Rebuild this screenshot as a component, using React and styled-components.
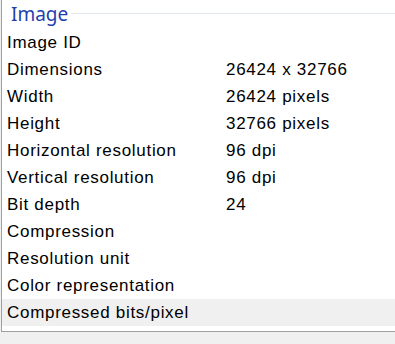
import React from 'react';
import styled, { createGlobalStyle } from 'styled-components';

const GlobalStyle = createGlobalStyle`
    html, body {
        margin: 0;
        padding: 0;
        background: #f0f0f0;
    }
`;

const Panel = styled.div`
    margin-left: 1px;
    width: 394px;
    height: 332px;
    box-sizing: border-box;
    background: #ffffff;
    border-left: 1px solid #a0a0a0;
    border-bottom: 1px solid #a0a0a0;
    overflow: hidden;
`;

const GroupHeader = styled.div`
    display: flex;
    align-items: flex-start;
    height: 29px;
    padding-left: 9px;
`;

const GroupTitle = styled.span`
    font-family: "Noto Sans", "Open Sans", sans-serif;
    font-size: 19px;
    line-height: 28px;
    color: #1f3fae;
`;

const GroupRule = styled.div`
    flex: 1;
    height: 1px;
    margin-top: 13px;
    margin-left: 3px;
    background: #e2e8f1;
`;

const Row = styled.div`
    display: grid;
    grid-template-columns: 219px 1fr;
    height: 27px;
    padding-left: 5px;
    font-family: "Liberation Sans", Arial, sans-serif;
    font-size: 17px;
    letter-spacing: 0.7px;
    line-height: 27px;
    color: #000000;
    background: ${(p) => (p.selected ? '#f0f0f0' : 'transparent')};
`;

const Cell = styled.span`
    white-space: nowrap;
`;

const rows = [
    ['Image ID', ''],
    ['Dimensions', '26424 x 32766'],
    ['Width', '26424 pixels'],
    ['Height', '32766 pixels'],
    ['Horizontal resolution', '96 dpi'],
    ['Vertical resolution', '96 dpi'],
    ['Bit depth', '24'],
    ['Compression', ''],
    ['Resolution unit', ''],
    ['Color representation', ''],
    ['Compressed bits/pixel', ''],
];

const App = () => {
    return (
        <>
            <GlobalStyle />
            <Panel>
                <GroupHeader>
                    <GroupTitle>Image</GroupTitle>
                    <GroupRule />
                </GroupHeader>
                {rows.map(([name, value], i) => (
                    <Row key={name} selected={i === rows.length - 1}>
                        <Cell>{name}</Cell>
                        <Cell>{value}</Cell>
                    </Row>
                ))}
            </Panel>
        </>
    );
};

export default App;
